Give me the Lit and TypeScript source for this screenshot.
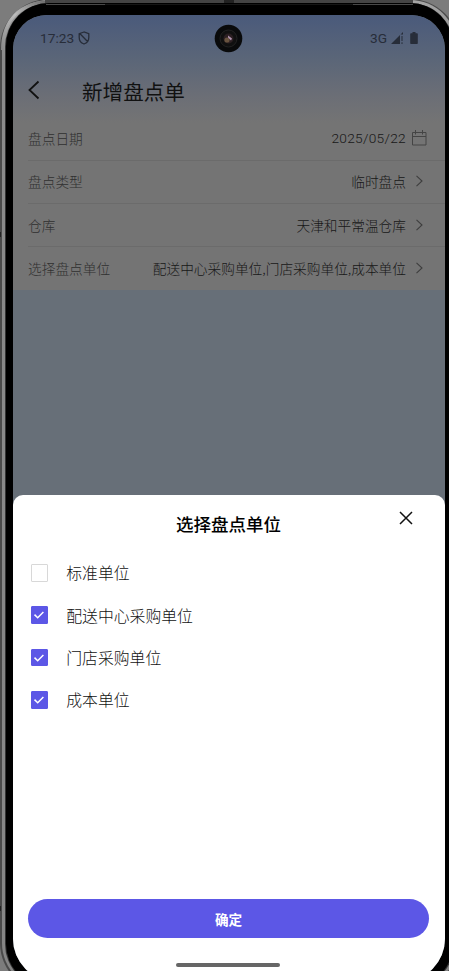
import { LitElement, html, css } from "lit";
import { customElement, property, state } from "lit/decorators.js";
import { classMap } from "lit/directives/class-map.js";

const FONT = css`"Noto Sans CJK SC", sans-serif`;

@customElement("device-frame")
class DeviceFrame extends LitElement {
  static styles = css`
    :host { position: absolute; inset: 0; }
    svg { display: block; }
  `;
  render() {
    return html`<svg width="449" height="971" viewBox="0 0 449 971">
      <defs>
        <linearGradient id="ring" x1="0" y1="0" x2="0" y2="1">
          <stop offset="0" stop-color="#a5a5a5" /><stop offset=".06" stop-color="#8a8a8a" />
          <stop offset="1" stop-color="#858585" />
        </linearGradient>
        <linearGradient id="corner" x1="0" y1="1" x2="1" y2="0">
          <stop offset="0" stop-color="#8a8a8a" /><stop offset=".5" stop-color="#bcbcbc" /><stop offset="1" stop-color="#666" />
        </linearGradient>
      </defs>
      <rect width="449" height="971" fill="#7c7c7c" />
      <rect x="0" y="-1" width="459" height="993" rx="49" fill="#4a4a4a" />
      <rect x="2" y="0" width="455" height="990" rx="47" fill="url(#ring)" />
      <path d="M2.500 50C2.500 20 20 2 50 2" fill="none" stroke="url(#corner)" stroke-width="3" />
      <rect x="45" y="0" width="368" height="3" fill="#444" />
      <rect x="5" y="3" width="449" height="985" rx="44" fill="#333" />
      <rect x="6" y="3" width="447" height="984" rx="43" fill="#000" />
      <path d="M46 4.500H413" stroke="#484848" stroke-width="1" />
      <path d="M105 4.500H353" stroke="#161616" stroke-width="1" />
      <path d="M224 0h10v3h-10z" fill="#222" />
      <path d="M0 232h1v5H0zM0 906h1v5H0z" fill="#222" />
    </svg>`;
  }
}

@customElement("status-bar")
class StatusBar extends LitElement {
  static styles = css`
    :host {
      display: flex; align-items: center; height: 48px; box-sizing: border-box;
      padding: 0 27px 2px; color: #272d39; font: 400 13.700px/20px Roboto, sans-serif;
    }
    .time { width: 34px; }
    .shield { margin-left: 4px; }
    .network { margin-left: auto; }
    .signal { margin-left: 4px; }
    .battery { margin-left: 6px; }
    svg { display: block; flex: none; }
  `;
  render() {
    return html`
      <span class="time">17:23</span>
      <svg class="shield" width="12" height="14" viewBox="0 0 12 14" fill="none" stroke="currentColor" stroke-width="1.300">
        <path d="M6 1 1.200 2.700v3.800C1.200 9.600 3.200 12 6 13c2.800-1 4.800-3.400 4.800-6.500V2.700zM2 2.800l7.500 7.700" />
      </svg>
      <span class="network">3G</span>
      <svg class="signal" width="13" height="12" viewBox="0 0 13 12" fill="currentColor">
        <path d="M0 12 9 3v9zM9 3l3-3v2.500H9.500zM10.500 4h1v5h-1zM10.500 10.300h1V12h-1z" />
      </svg>
      <svg class="battery" width="8" height="12" viewBox="0 0 8 12" fill="currentColor">
        <path d="M2.500 0h3v1.200H7q.8 0 .8.8v9.200q0 .8-.8.8H1q-.8 0-.8-.8V2q0-.8.8-.8h1.500z" />
      </svg>`;
  }
}

@customElement("form-row")
class FormRow extends LitElement {
  @property() label = "";
  @property() value = "";
  @property() icon = "arrow";
  static styles = css`
    :host {
      display: flex; align-items: center; height: 43.200px; box-sizing: border-box;
      margin-left: 15px; padding: 0 18px 1.100px 0; border-bottom: 1px solid #6b6b6b;
      font: 300 13.700px/20px ${FONT};
    }
    :host(:last-of-type) { border-bottom-color: transparent; }
    .label { color: #303030; }
    .value { margin-left: auto; color: #171717; }
    .date { font: 300 13.700px/20px Roboto, sans-serif; letter-spacing: .3px; }
    .icon { width: 16px; margin-left: 5px; display: flex; justify-content: center; }
    svg { display: block; }
  `;
  render() {
    const calendar = this.icon === "calendar";
    return html`<span class="label">${this.label}</span>
      <span class=${classMap({ value: true, date: calendar })}>${this.value}</span>
      <span class="icon">${calendar
        ? html`<svg width="16" height="16" viewBox="0 0 16 16" fill="none" stroke="#444">
            <path d="M1.500 2.500H15V15H1.500zM1.500 6.500H15M4.500 0V4.500M11.500 0V4.500" /></svg>`
        : html`<svg width="16" height="12" viewBox="0 0 16 12" fill="none" stroke="#3e3e3e" stroke-width="1.100">
            <path d="M5.500 .8 11 6l-5.500 5.200" /></svg>`}</span>`;
  }
}

@customElement("unit-option")
class UnitOption extends LitElement {
  @property() label = "";
  @property({ type: Boolean }) checked = false;
  static styles = css`
    :host {
      display: flex; align-items: center; gap: 18px; height: 42.300px;
      font: 300 15.850px/24px ${FONT}; color: #111;
    }
    .box {
      width: 17.500px; height: 17.500px; box-sizing: border-box; border: 1px solid #d8d8d8;
      border-radius: 1px; display: flex; align-items: center; justify-content: center;
      margin-bottom: 1px;
    }
    .checked { background: #5c57e6; border-color: #5c57e6; }
    svg { display: block; flex: none; }
  `;
  render() {
    return html`<span class=${classMap({ box: true, checked: this.checked })}>
        ${this.checked ? html`<svg width="12" height="10" viewBox="0 0 12 10" fill="none" stroke="#fff" stroke-width="1.500">
          <path d="M1.500 4.600 4.700 7.800 10.400 2" /></svg>` : ""}
      </span><span>${this.label}</span>`;
  }
}

@customElement("app-root")
class AppRoot extends LitElement {
  @state() private rows = [
    { label: "盘点日期", value: "2025/05/22", icon: "calendar" },
    { label: "盘点类型", value: "临时盘点", icon: "arrow" },
    { label: "仓库", value: "天津和平常温仓库", icon: "arrow" },
    { label: "选择盘点单位", value: "配送中心采购单位,门店采购单位,成本单位", icon: "arrow" },
  ];
  @state() private units = [
    { label: "标准单位", checked: false },
    { label: "配送中心采购单位", checked: true },
    { label: "门店采购单位", checked: true },
    { label: "成本单位", checked: true },
  ];
  static styles = css`
    :host {
      display: block; position: relative; width: 449px; height: 971px; overflow: hidden;
      box-sizing: border-box; padding: 15px 4px 0 13px; font-family: ${FONT};
    }
    .screen {
      position: relative; display: flex; flex-direction: column; height: 966px;
      border-radius: 34px 34px 42px 42px; overflow: hidden; background: #676f78;
    }
    .top {
      flex: none; height: 275px;
      background: linear-gradient(#4a5a7b 0, #5b6678 45px, #6b6e76 80px, #747474 108px);
    }
    .camera { position: absolute; left: 201px; top: 9px; }
    .nav {
      display: flex; align-items: center; height: 54.600px; box-sizing: border-box;
      padding: 1.500px 0 0 14px; color: #111;
    }
    .nav svg { display: block; margin-bottom: 2px; }
    .title { margin-left: 42px; font: 400 20.600px/30px ${FONT}; }
    .sheet {
      flex: none; margin-top: auto; height: 486px; border-radius: 10px 10px 0 0;
      background: #fff; display: flex; flex-direction: column;
    }
    .head { display: grid; grid-template-columns: 1fr auto 1fr; align-items: center; height: 57.300px; }
    .head h2 { grid-column: 2; margin: 0 1px 0 0; font: 500 17.500px/26px ${FONT}; color: #000; }
    .close { justify-self: end; margin: 0 32px 11px 0; display: block; }
    .units { padding-left: 17.700px; }
    .ok {
      width: 401px; height: 39px; margin: auto 0 25px 15px; border: 0; border-radius: 20px;
      background: #5c57e6; color: #fff; font: 700 13.600px/20px ${FONT}; padding: 0;
    }
    .handle { width: 104px; height: 4px; border-radius: 2px; background: #666; margin: 0 0 14px 163px; }
  `;
  render() {
    return html`
      <device-frame></device-frame>
      <main class="screen">
        <section class="top">
          <status-bar></status-bar>
          <header class="nav">
            <svg width="13" height="20" viewBox="0 0 13 20" fill="none" stroke="currentColor" stroke-width="1.800"><path d="M11.500 1.500 2.500 10l9 8.500" /></svg>
            <span class="title">新增盘点单</span>
          </header>
          ${this.rows.map((r) => html`<form-row .label=${r.label} .value=${r.value} .icon=${r.icon}></form-row>`)}
        </section>
        <svg class="camera" width="29" height="29" viewBox="0 0 29 29">
          <circle cx="14.500" cy="14.500" r="13.800" fill="#090a0b" />
          <circle cx="14.500" cy="14.500" r="8.500" fill="#101010" stroke="#222" />
          <circle cx="14.500" cy="14.500" r="5" fill="#2b1f22" />
          <circle cx="13" cy="16" r="2.600" fill="#68533f" />
          <path d="m14 11.500 4 3-1 2-3-3z" fill="#b092ae" />
        </svg>
        <section class="sheet">
          <div class="head">
            <h2>选择盘点单位</h2>
            <svg class="close" width="14" height="14" viewBox="0 0 14 14" fill="none" stroke="#111" stroke-width="1.500"><path d="m1 1 12 12M13 1 1 13" /></svg>
          </div>
          <div class="units">
            ${this.units.map((u) => html`<unit-option .label=${u.label} .checked=${u.checked}></unit-option>`)}
          </div>
          <button class="ok">确定</button>
          <div class="handle"></div>
        </section>
      </main>`;
  }
}
